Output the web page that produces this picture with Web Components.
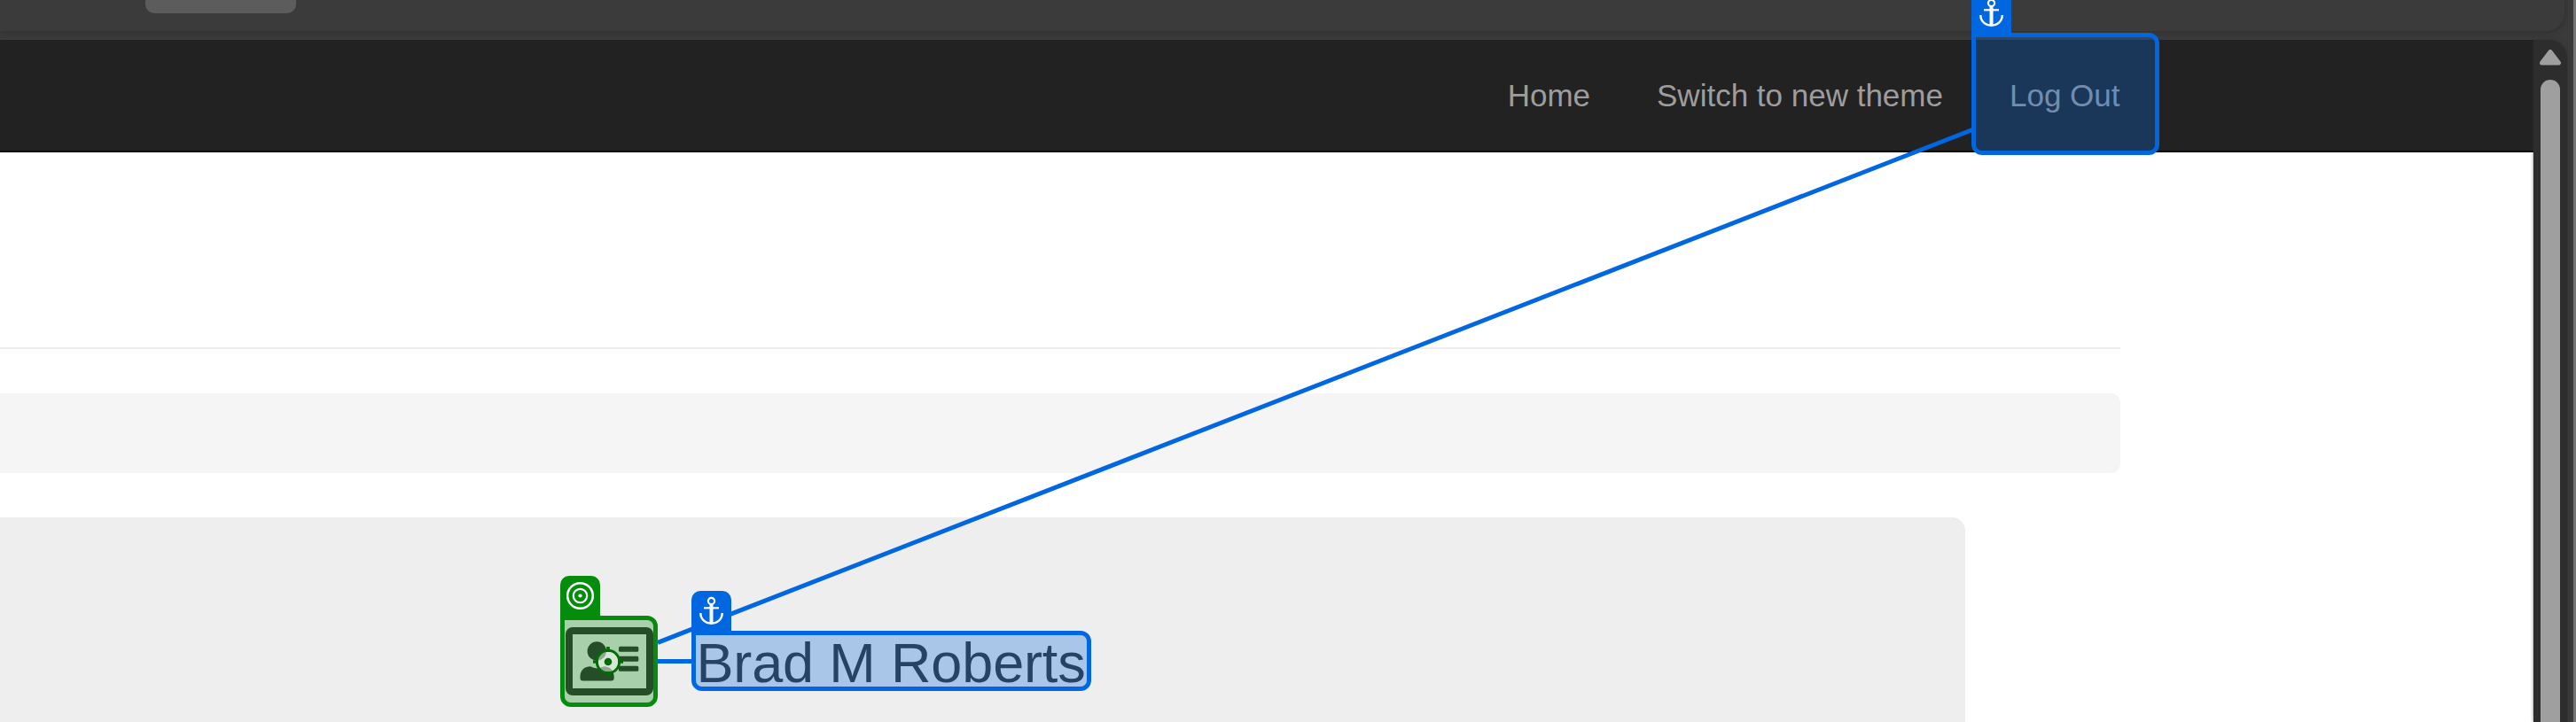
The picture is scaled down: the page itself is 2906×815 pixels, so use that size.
<!DOCTYPE html>
<html lang="en">
<head>
<meta charset="utf-8">
<title>Page inspector</title>
<style>
html,body{margin:0;height:100%;overflow:hidden;background:#3b3b3b}
body{font-family:"Liberation Sans",Arial,sans-serif}
</style>
</head>
<body>
<browser-window></browser-window>
<script>
function define(name, html) {
  customElements.define(name, class extends HTMLElement {
    constructor() {
      super();
      const t = document.createElement('template');
      t.innerHTML = html;
      this.attachShadow({mode: 'open'}).append(t.content.cloneNode(true));
    }
  });
}

define('browser-toolbar', `
<style>
:host{display:flex;height:45px;background:#3b3b3b}
.bar{width:2893px;height:35px;border-radius:0 0 20px 0;background:#3b3b3b;box-shadow:0 1px 6px 1px #303030}
.tab{width:170px;height:15px;margin-left:164px;border-radius:0 0 10px 10px;background:#5c5c5c}
</style>
<div class="bar"><div class="tab"></div></div>`);

define('scroll-bar', `
<style>
:host{display:flex;flex-direction:column;align-items:center;width:38px;height:770px;background:#2d2d2d;border-radius:0 20px 0 0;box-shadow:1px 0 4px #333}
svg{display:block;margin-top:11px}
.thumb{width:22px;flex:1;margin-top:16px;border-radius:11px 11px 0 0;background:#9f9f9f}
</style>
<svg width="24" height="18" viewBox="0 0 24 18"><path d="M12 2.500L21.500 15H2.500Z" fill="#9f9f9f" stroke="#9f9f9f" stroke-width="5" stroke-linejoin="round"/></svg>
<div class="thumb"></div>`);

define('nav-bar', `
<style>
:host{display:flex;box-sizing:border-box;height:127px;padding:0 466.5px 0 0;justify-content:flex-end;align-items:center;gap:75px;background:#222;border-bottom:2px solid #080808;color:#9d9d9d;font-size:35px;line-height:50px;white-space:nowrap}
</style><slot></slot>`);

define('id-card-icon', `
<style>:host{display:block;width:99px;height:77px}svg{display:block}</style>
<svg width="99" height="77" viewBox="0 0 99 77" fill="#333">
<rect x="4" y="4" width="91" height="69" rx="4" fill="none" stroke="#333" stroke-width="8"/>
<circle cx="35.3" cy="27" r="10.7"/>
<path d="M16.500 57.500V56C16.500 48 22 44.300 28 44.300Q35.500 48.500 43 44.300C49 44.300 54.700 48 54.700 56V57.500Q54.700 60.500 51.500 60.500H19.500Q16.500 60.500 16.500 57.500Z"/>
<rect x="60" y="21.700" width="22.300" height="6" rx="1.500"/><rect x="60" y="32.700" width="22.300" height="6" rx="1.500"/><rect x="60" y="43.700" width="22.300" height="6" rx="1.500"/>
</svg>`);

define('profile-panel', `
<style>
:host{display:flex;box-sizing:border-box;width:2217px;height:231px;padding:124px 0 0 638px;gap:48.5px;align-items:flex-start;border-radius:0 15px 0 0;background:#eee;color:#333}
.name{font-size:63px;line-height:70px;letter-spacing:-.15px;margin-top:4.5px;white-space:nowrap}
</style>
<id-card-icon></id-card-icon><div class="name"><slot></slot></div>`);

define('page-content', `
<style>
:host{display:block;flex:1;background:#fff}
.rule{width:2392px;height:2px;margin-top:220px;background:#eee}
.crumbs{width:2392px;height:90px;margin:50px 0;border-radius:0 10px 10px 0;background:#f5f5f5}
</style>
<nav-bar><span>Home</span><span>Switch to new theme</span><span>Log Out</span></nav-bar>
<div class="rule"></div><div class="crumbs"></div>
<profile-panel>Brad M Roberts</profile-panel>`);

define('element-marker', `
<style>
:host{position:absolute;display:block;box-sizing:border-box;border:5px solid var(--c);background:var(--f);background-clip:padding-box;border-radius:0 12px 12px 12px}
.tag{position:absolute;left:-5px;top:-50px;width:45px;height:45px;border-radius:10px 10px 0 0;background:var(--c)}
</style>
<div class="tag"><slot></slot></div>`);

define('anchor-glyph', `
<style>:host,svg{display:block}</style>
<svg width="45" height="45" viewBox="0 0 45 45" fill="none" stroke="#fff">
<circle cx="22.500" cy="11.500" r="3.600" stroke-width="2.200"/>
<path d="M14 19.300H31" stroke-width="2.200"/><path d="M22.500 15V37" stroke-width="4"/>
<path d="M10.300 25C10.300 32 15.500 36.700 22.500 36.700S34.700 32 34.700 25" stroke-width="2.400"/>
</svg>`);

define('target-glyph', `
<style>:host,svg{display:block}</style>
<svg width="45" height="45" viewBox="0 0 45 45" fill="none" stroke="#fff">
<circle cx="22.500" cy="22.500" r="14.300" stroke-width="2.500"/><circle cx="22.500" cy="22.500" r="7.700" stroke-width="2.200"/><circle cx="22.500" cy="22.500" r="2.100" fill="#fff" stroke="none"/>
</svg>`);

define('marker-layer', `
<style>
:host{position:absolute;inset:0;display:block;overflow:hidden}
svg.links{position:absolute;inset:0}
svg.aim{position:absolute;left:666px;top:727px}
.blue{--c:#0067e1;--f:rgba(10,107,221,.3)}
.green{--c:#058c0c;--f:rgba(5,140,12,.3)}
.out{left:2224px;top:37px;width:212px;height:138px}
.name{left:780px;top:712px;width:451px;height:68px}
.card{left:632px;top:695px;width:110px;height:103px}
</style>
<svg class="links" width="2906" height="815" fill="none" stroke="#0067e1" stroke-width="5"><path d="M742 725.300L2225 146.500M742 746.500H781"/></svg>
<element-marker class="blue out"><anchor-glyph></anchor-glyph></element-marker>
<element-marker class="blue name"><anchor-glyph></anchor-glyph></element-marker>
<element-marker class="green card"><target-glyph></target-glyph></element-marker>
<svg class="aim" width="40" height="40" viewBox="0 0 40 40" fill="none" stroke="#056a08">
<circle cx="20" cy="20" r="12.700" fill="rgba(255,255,255,.5)" stroke-width="3"/>
<path d="M20 3V9M20 31V37M3 20H9M31 20H37" stroke-width="3.600"/><circle cx="20" cy="20" r="4.300" fill="#056a08" stroke="none"/>
</svg>`);

define('browser-window', `
<style>
:host{position:relative;display:flex;width:2906px;height:815px;overflow:hidden;background:#3b3b3b}
.main{flex:1;display:flex;flex-direction:column}
.view{display:flex;height:770px;width:2896px}
.edge{width:3px;background:#757575}
</style>
<div class="main"><browser-toolbar></browser-toolbar><div class="view"><page-content></page-content><scroll-bar></scroll-bar></div></div>
<div class="edge"></div>
<marker-layer></marker-layer>`);
</script>
</body>
</html>
